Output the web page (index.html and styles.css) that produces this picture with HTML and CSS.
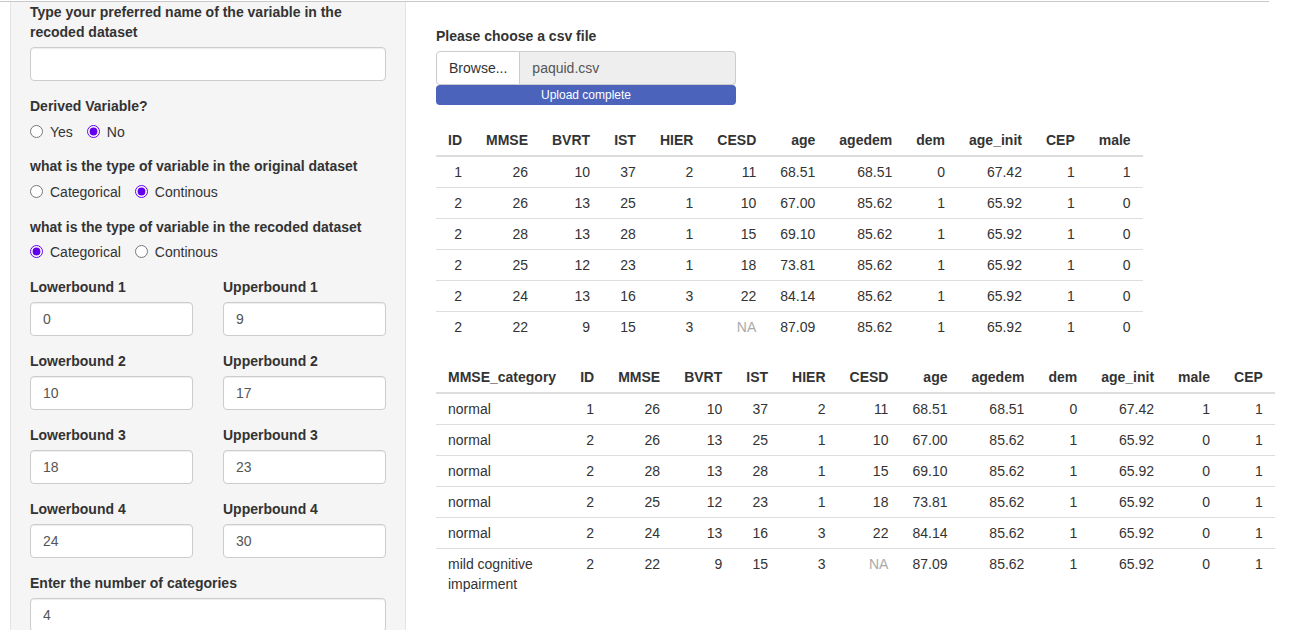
FILE: index.html
```html
<!DOCTYPE html>
<html>
<head>
<meta charset="utf-8">
<link rel="stylesheet" href="styles.css">
</head>
<body>
<div class="topline"></div>
<div class="layout">
  <aside class="well">
    <div class="form-group">
      <label class="ctl-label">Type your preferred name of the variable in the recoded dataset</label>
      <input class="form-control" type="text" value="">
    </div>
    <div class="form-group">
      <label class="ctl-label">Derived Variable?</label>
      <div class="radios">
        <label class="radio-inline"><input type="radio" name="derived"><span>Yes</span></label>
        <label class="radio-inline"><input type="radio" name="derived" checked><span>No</span></label>
      </div>
    </div>
    <div class="form-group">
      <label class="ctl-label">what is the type of variable in the original dataset</label>
      <div class="radios">
        <label class="radio-inline"><input type="radio" name="orig"><span>Categorical</span></label>
        <label class="radio-inline"><input type="radio" name="orig" checked><span>Continous</span></label>
      </div>
    </div>
    <div class="form-group">
      <label class="ctl-label">what is the type of variable in the recoded dataset</label>
      <div class="radios">
        <label class="radio-inline"><input type="radio" name="rec" checked><span>Categorical</span></label>
        <label class="radio-inline"><input type="radio" name="rec"><span>Continous</span></label>
      </div>
    </div>
    <div class="bounds">
      <div class="form-group"><label class="ctl-label">Lowerbound 1</label><input class="form-control" type="text" value="0"></div>
      <div class="form-group"><label class="ctl-label">Upperbound 1</label><input class="form-control" type="text" value="9"></div>
      <div class="form-group"><label class="ctl-label">Lowerbound 2</label><input class="form-control" type="text" value="10"></div>
      <div class="form-group"><label class="ctl-label">Upperbound 2</label><input class="form-control" type="text" value="17"></div>
      <div class="form-group"><label class="ctl-label">Lowerbound 3</label><input class="form-control" type="text" value="18"></div>
      <div class="form-group"><label class="ctl-label">Upperbound 3</label><input class="form-control" type="text" value="23"></div>
      <div class="form-group"><label class="ctl-label">Lowerbound 4</label><input class="form-control" type="text" value="24"></div>
      <div class="form-group"><label class="ctl-label">Upperbound 4</label><input class="form-control" type="text" value="30"></div>
    </div>
    <div class="form-group">
      <label class="ctl-label">Enter the number of categories</label>
      <input class="form-control" type="text" value="4">
    </div>
  </aside>
  <main class="main">
    <div class="file-group">
      <label class="ctl-label">Please choose a csv file</label>
      <div class="input-group">
        <span class="btn-file">Browse...</span>
        <span class="file-name">paquid.csv</span>
      </div>
      <div class="progress">Upload complete</div>
    </div>
    <table class="tbl">
      <thead>
        <tr><th>ID</th><th>MMSE</th><th>BVRT</th><th>IST</th><th>HIER</th><th>CESD</th><th>age</th><th>agedem</th><th>dem</th><th>age_init</th><th>CEP</th><th>male</th></tr>
      </thead>
      <tbody>
        <tr><td>1</td><td>26</td><td>10</td><td>37</td><td>2</td><td>11</td><td>68.51</td><td>68.51</td><td>0</td><td>67.42</td><td>1</td><td>1</td></tr>
        <tr><td>2</td><td>26</td><td>13</td><td>25</td><td>1</td><td>10</td><td>67.00</td><td>85.62</td><td>1</td><td>65.92</td><td>1</td><td>0</td></tr>
        <tr><td>2</td><td>28</td><td>13</td><td>28</td><td>1</td><td>15</td><td>69.10</td><td>85.62</td><td>1</td><td>65.92</td><td>1</td><td>0</td></tr>
        <tr><td>2</td><td>25</td><td>12</td><td>23</td><td>1</td><td>18</td><td>73.81</td><td>85.62</td><td>1</td><td>65.92</td><td>1</td><td>0</td></tr>
        <tr><td>2</td><td>24</td><td>13</td><td>16</td><td>3</td><td>22</td><td>84.14</td><td>85.62</td><td>1</td><td>65.92</td><td>1</td><td>0</td></tr>
        <tr><td>2</td><td>22</td><td>9</td><td>15</td><td>3</td><td class="na">NA</td><td>87.09</td><td>85.62</td><td>1</td><td>65.92</td><td>1</td><td>0</td></tr>
      </tbody>
    </table>
    <table class="tbl">
      <thead>
        <tr><th class="left">MMSE_category</th><th>ID</th><th>MMSE</th><th>BVRT</th><th>IST</th><th>HIER</th><th>CESD</th><th>age</th><th>agedem</th><th>dem</th><th>age_init</th><th>male</th><th>CEP</th></tr>
      </thead>
      <tbody>
        <tr><td class="left">normal</td><td>1</td><td>26</td><td>10</td><td>37</td><td>2</td><td>11</td><td>68.51</td><td>68.51</td><td>0</td><td>67.42</td><td>1</td><td>1</td></tr>
        <tr><td class="left">normal</td><td>2</td><td>26</td><td>13</td><td>25</td><td>1</td><td>10</td><td>67.00</td><td>85.62</td><td>1</td><td>65.92</td><td>0</td><td>1</td></tr>
        <tr><td class="left">normal</td><td>2</td><td>28</td><td>13</td><td>28</td><td>1</td><td>15</td><td>69.10</td><td>85.62</td><td>1</td><td>65.92</td><td>0</td><td>1</td></tr>
        <tr><td class="left">normal</td><td>2</td><td>25</td><td>12</td><td>23</td><td>1</td><td>18</td><td>73.81</td><td>85.62</td><td>1</td><td>65.92</td><td>0</td><td>1</td></tr>
        <tr><td class="left">normal</td><td>2</td><td>24</td><td>13</td><td>16</td><td>3</td><td>22</td><td>84.14</td><td>85.62</td><td>1</td><td>65.92</td><td>0</td><td>1</td></tr>
        <tr><td class="left">mild cognitive impairment</td><td>2</td><td>22</td><td>9</td><td>15</td><td>3</td><td class="na">NA</td><td>87.09</td><td>85.62</td><td>1</td><td>65.92</td><td>0</td><td>1</td></tr>
      </tbody>
    </table>
  </main>
</div>
</body>
</html>
```

FILE: styles.css
```css
* { box-sizing: border-box; }
html, body { margin: 0; padding: 0; }
body {
  font-family: "Liberation Sans", Arial, sans-serif;
  font-size: 14px;
  line-height: 20px;
  color: #333;
  background: #fff;
  overflow: hidden;
  height: 630px;
}
.topline {
  margin-top: 1px;
  width: 1269px;
  height: 1px;
  background: #c9c9c9;
}
.layout {
  display: flex;
  align-items: stretch;
  height: 628px;
  overflow: hidden;
}
.well {
  margin-left: 10px;
  width: 396px;
  flex: none;
  background: #f5f5f5;
  border-left: 1px solid #e3e3e3;
  border-right: 1px solid #e3e3e3;
  padding: 0 19px;
  overflow: hidden;
}
.form-group { margin-bottom: 15px; }
.ctl-label {
  display: block;
  font-weight: bold;
  margin-bottom: 5px;
}
.form-control {
  display: block;
  width: 100%;
  height: 34px;
  padding: 6px 12px;
  font-family: inherit;
  font-size: 14px;
  line-height: 20px;
  color: #555;
  background: #fff;
  border: 1px solid #ccc;
  border-radius: 4px;
  box-shadow: inset 0 1px 1px rgba(0,0,0,0.075);
}
.radios {
  display: flex;
  gap: 14px;
  height: 20.34px;
  padding-top: 0.5px;
}
.radio-inline {
  display: flex;
  align-items: center;
  position: relative;
  padding-left: 20px;
  height: 20px;
}
.radio-inline input {
  position: absolute;
  left: 0;
  top: 3px;
  margin: 0;
  width: 13px;
  height: 13px;
  accent-color: #6200ee;
}
.bounds {
  display: grid;
  grid-template-columns: 1fr 1fr;
  column-gap: 30px;
}
.main {
  margin-left: 30px;
  width: 833px;
  flex: none;
  padding-top: 24px;
}
.file-group { margin-bottom: 20px; }
.input-group {
  display: flex;
  width: 300px;
  height: 34px;
}
.btn-file {
  display: block;
  padding: 6px 12px;
  border: 1px solid #ccc;
  border-radius: 4px 0 0 4px;
  background: #fff;
  color: #333;
}
.file-name {
  flex: 1;
  display: block;
  padding: 6px 12px;
  border: 1px solid #ccc;
  border-left: none;
  border-radius: 0 4px 4px 0;
  background: #eee;
  color: #555;
}
.progress {
  width: 300px;
  height: 20px;
  border-radius: 4px;
  background: #4b63bb;
  color: #fff;
  font-size: 12px;
  line-height: 20px;
  text-align: center;
}
.tbl {
  border-collapse: collapse;
  margin-bottom: 20px;
  max-width: 100%;
}
.tbl th, .tbl td {
  padding: 5px 12px;
  text-align: right;
  line-height: 20px;
  vertical-align: top;
}
.tbl th {
  font-weight: bold;
  border-bottom: 2px solid #ddd;
  vertical-align: bottom;
}
.tbl tbody tr + tr td { border-top: 1px solid #ddd; }
.tbl .left { text-align: left; }
.tbl .na { color: #aaa; }
```
